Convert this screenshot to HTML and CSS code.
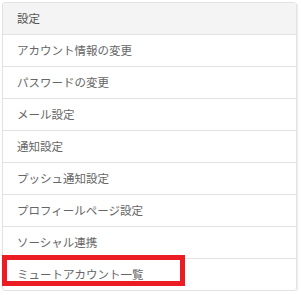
FILE: index.html
```html
<!DOCTYPE html>
<html>
<head>
    <title>設定</title>
    <link rel="stylesheet" href="styles.css">
</head>
<body>

    <div class="panel">
        <div class="panelHeading">設定</div>
        <ul class="menu">
            <li class="item">アカウント情報の変更</li>
            <li class="item">パスワードの変更</li>
            <li class="item">メール設定</li>
            <li class="item">通知設定</li>
            <li class="item">プッシュ通知設定</li>
            <li class="item">プロフィールページ設定</li>
            <li class="item">ソーシャル連携</li>
            <li class="item marked">ミュートアカウント一覧</li>
        </ul>
    </div>

</body>
</html>
```

FILE: styles.css
```css
body {
    font-family: "Noto Sans CJK JP", "Noto Sans", sans-serif;
    background-color: white;
    margin: 0;
    padding: 2px 0 0 2px;
}

.panel {
    width: 293px;
    border: 1px solid #e2e2e2;
    border-radius: 3px;
    box-shadow: 1px 1px 2px rgba(0, 0, 0, 0.08);
}

.panelHeading {
    background-color: #f4f4f4;
    color: #555;
    font-size: 11.5px;
    height: 31px;
    line-height: 31px;
    padding-left: 14px;
    border-bottom: 1px solid #e2e2e2;
}

.menu {
    list-style: none;
    margin: 0;
    padding: 0;
}

.item {
    color: #666;
    font-size: 11.5px;
    height: 31px;
    line-height: 31px;
    padding-left: 14px;
    border-bottom: 1px solid #e2e2e2;
    position: relative;
}

.item:last-child {
    border-bottom: none;
}

/* highlight frame drawn over the last row */
.marked::after {
    content: "";
    position: absolute;
    left: -1px;
    top: -4px;
    width: 173px;
    height: 21px;
    border: 5px solid #ec1c24;
}
```
